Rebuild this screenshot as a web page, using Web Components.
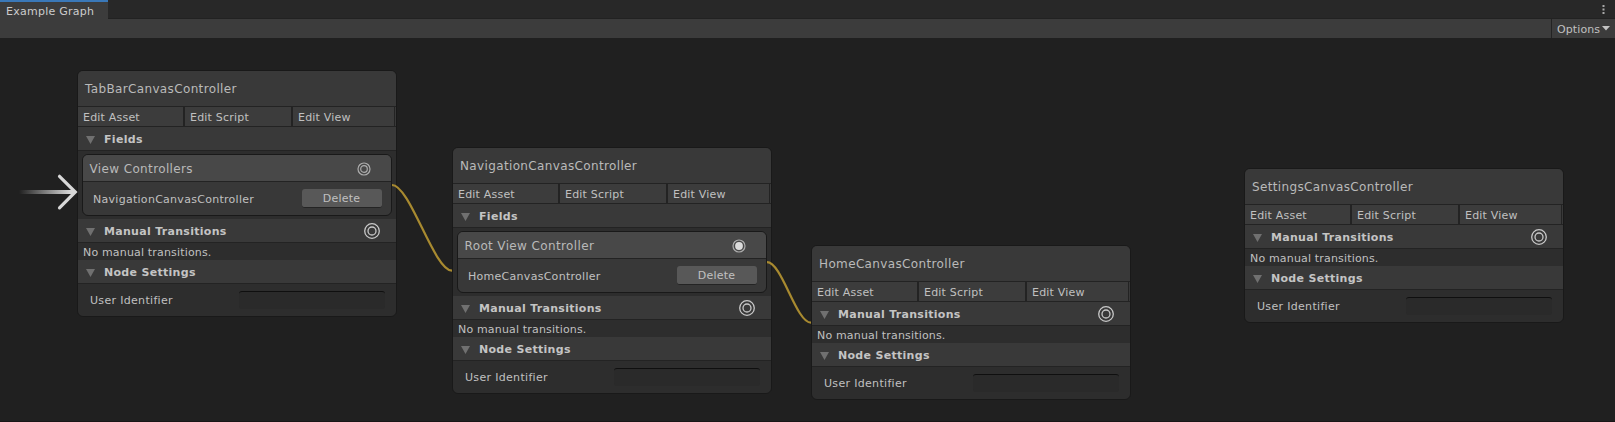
<!DOCTYPE html>
<html lang="en"><head><meta charset="utf-8"><title>Example Graph</title>
<style>html,body{margin:0;height:422px;overflow:hidden;background:#202020}</style></head>
<body>
<graph-window></graph-window>
<script>
const define = (name, html, setup) => customElements.define(name, class extends HTMLElement {
  constructor() {
    super();
    const t = document.createElement('template');
    t.innerHTML = '<style>*{box-sizing:border-box}:host{box-sizing:border-box}</style>' + html;
    this.attachShadow({mode: 'open'}).append(t.content.cloneNode(true));
  }
  connectedCallback() { if (setup) setup(this, this.shadowRoot); }
});

define('port-icon', `<style>:host{display:block;width:16px;height:16px}svg{display:block}
.dot{display:none}:host([filled]) .dot{display:block}:host([filled]) .ring{display:none}
.small{display:none}:host([small]) .small{display:block}:host([small]) .large{display:none}</style>
<svg width="16" height="16" fill="none" stroke="#c8c8c8">
<g class="large" stroke-width="1.3"><circle cx="8" cy="8" r="7.3"/><circle cx="8" cy="8" r="4"/></g>
<g class="small" stroke="#adadad" stroke-width="1.2"><circle cx="8" cy="8" r="6"/><circle class="ring" cx="8" cy="8" r="3.3"/><circle class="dot" cx="8" cy="8" r="3.9" fill="#dcdcdc" stroke="none"/></g></svg>`);

define('node-section', `<style>:host{display:block}
header{display:flex;height:24px;background:#393939;border-bottom:1px solid #232323;padding:6px 16px 0 8px;font-weight:bold;letter-spacing:.3px;line-height:13px;color:#c4c4c4}
svg{display:block;margin:3px 9px 0 0;flex:none}
.title{flex:1}.end{margin-top:-2px}</style>
<header><svg width="9" height="8"><path d="M0 0h9l-4.5 8z" fill="#707070"/></svg><span class="title"><slot name="title"></slot></span><span class="end"><slot name="port"></slot></span></header><slot></slot>`);

define('field-box', `<style>:host{display:block;margin:3px 4px;height:62px;border:1px solid #191919;border-radius:6px;overflow:hidden;background:#383838}
header{display:flex;justify-content:space-between;height:27px;background:#484848;border-bottom:1px solid #232323;padding:7px 19px 0 6.5px;font-size:12px;line-height:14px;letter-spacing:.37px;color:#b9b9b9}
::slotted(port-icon){margin-top:-1.3px}
.row{display:flex;justify-content:space-between;padding:7px 9px 0 10px}
.name{padding-top:4px;letter-spacing:.28px}
button{display:block;margin:0;width:80px;height:19px;border:0;border-bottom:1px solid #242424;border-radius:3px;background:#585858;color:#c0c0c0;font:inherit;letter-spacing:.25px;line-height:13px;padding:1px 1px 0 0}</style>
<header><slot name="label"></slot><slot name="port"></slot></header>
<div class="row"><span class="name"><slot></slot></span><button>Delete</button></div>`);

define('graph-node', `<style>:host{display:block;position:absolute;width:320px;border:1px solid #191919;border-radius:6px;background:#2d2d2d;overflow:hidden}
h2{margin:0;height:36px;padding:11px 7px 0;font-size:12px;font-weight:normal;line-height:14px;letter-spacing:.36px;background:#393939;border-bottom:1px solid #232323;color:#bababa}
nav{display:grid;grid-template-columns:105px 106px 101px;gap:2px;height:20px;background:#232323;border-bottom:1px solid #232323;position:relative}
nav span{background:#3c3c3c;padding:4px 5px 0;letter-spacing:.2px}
nav:after{content:"";width:1px;background:#393939;position:absolute;right:0;top:0;bottom:0}
.note{height:17px;padding:3px 5px 0;letter-spacing:.17px}
.set{display:flex;justify-content:space-between;height:32px;padding:7px 11px 0 12px}
.set span{padding-top:3px;letter-spacing:.32px}
.input{width:146px;height:18px;background:#2a2a2a;border-top:1px solid #0f0f0f;border-radius:3px}</style>
<h2></h2><nav><span>Edit Asset</span><span>Edit Script</span><span>Edit View</span></nav>
<slot></slot>
<node-section><span slot="title">Manual Transitions</span><port-icon slot="port"></port-icon><div class="note">No manual transitions.</div></node-section>
<node-section><span slot="title">Node Settings</span><div class="set"><span>User Identifier</span><div class="input"></div></div></node-section>`,
(el, root) => {
  root.querySelector('h2').textContent = el.getAttribute('name');
  el.style.left = el.getAttribute('x') + 'px';
  el.style.top = el.getAttribute('y') + 'px';
});

define('graph-edges', `<style>:host{display:block;position:absolute;inset:0;pointer-events:none}svg{display:block}</style>
<svg width="1615" height="384" viewBox="0 38 1615 384" fill="none">
<defs><linearGradient id="fade" gradientUnits="userSpaceOnUse" x1="19" y1="0" x2="70" y2="0"><stop stop-color="#d6d6d6" stop-opacity="0"/><stop offset="1" stop-color="#d6d6d6"/></linearGradient></defs>
<path d="M392 185C410 185 434 270.7 452 270.7M767 262.2C782 262.2 796 322.7 811 322.7" stroke="#a88a30" stroke-width="2.2"/>
<path d="M19 190h56v4H19z" fill="url(#fade)"/>
<path d="M59.5 176.3L75.3 192L59.5 207.8" stroke="#d8d8d8" stroke-width="3.2" stroke-linecap="round"/></svg>`);

define('window-bar', `<style>:host{display:block;height:38px;line-height:13px}
.tabs{display:flex;justify-content:space-between;height:19px;background:#282828;border-bottom:1px solid #222}
.tab{width:108px;height:19px;background:#3c3c3c;border-top:2px solid #3a78b8;padding:3px 6px 0;letter-spacing:.25px;color:#cccccc}
.more{display:block;margin:5px 10px 0 0}
.tools{display:flex;justify-content:flex-end;height:19px;background:#3c3c3c}
.opt{display:flex;width:64px;border-left:1px solid #232323;padding:4px 5px 0 5px;justify-content:space-between;letter-spacing:.1px}
.opt svg{margin-top:3px}</style>
<div class="tabs"><div class="tab">Example Graph</div><svg class="more" width="3" height="9" fill="#a8a8a8"><path d="M.5 0h2v2h-2zM.5 3.5h2v2h-2zM.5 7h2v2h-2z"/></svg></div>
<div class="tools"><div class="opt"><span>Options</span><svg width="8" height="5"><path d="M0 0h8l-4 4.5z" fill="#c4c4c4"/></svg></div></div>`);

define('graph-window', `<style>:host{display:block;position:relative;width:1615px;height:422px;overflow:hidden;background:#202020;border-bottom:1px solid #191516;font:11px "DejaVu Sans",sans-serif;line-height:13px;color:#c0c0c0}
graph-edges{top:38px}</style>
<window-bar></window-bar>
<graph-node name="TabBarCanvasController" x="77" y="70"><node-section><span slot="title">Fields</span><field-box><span slot="label">View Controllers</span><port-icon slot="port" small></port-icon>NavigationCanvasController</field-box></node-section></graph-node>
<graph-node name="NavigationCanvasController" x="452" y="147"><node-section><span slot="title">Fields</span><field-box><span slot="label">Root View Controller</span><port-icon slot="port" small filled></port-icon>HomeCanvasController</field-box></node-section></graph-node>
<graph-node name="HomeCanvasController" x="811" y="245"></graph-node>
<graph-node name="SettingsCanvasController" x="1244" y="168"></graph-node>
<graph-edges></graph-edges>`);
</script>
</body></html>
